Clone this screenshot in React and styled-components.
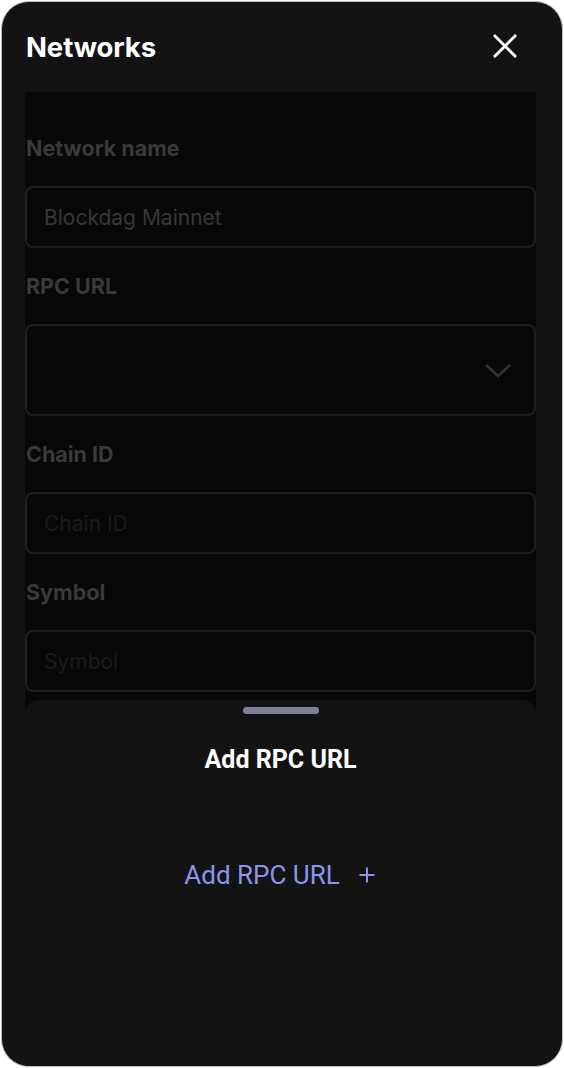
import React from "react";
import styled, { createGlobalStyle } from "styled-components";

const Global = createGlobalStyle`
  html, body { margin: 0; padding: 0; background: #ffffff; }
  * { box-sizing: border-box; }
`;

const Frame = styled.div`
  width: 564px;
  height: 1068px;
  padding: 1px;
  background: #ffffff;
`;

const Panel = styled.div`
  position: relative;
  width: 562px;
  height: 1066px;
  background: #131313;
  border: 1px solid #bdbdbd;
  border-radius: 28px;
  overflow: hidden;
  display: flex;
  flex-direction: column;
  font-family: Inter, "Noto Sans", sans-serif;
`;

const Header = styled.div`
  height: 90px;
  padding: 0 24px 0 24px;
  display: flex;
  align-items: center;
  justify-content: space-between;
`;

const Title = styled.h1`
  margin: 0;
  padding-bottom: 1px;
  font-size: 27.5px;
  font-weight: 700;
  color: #ffffff;
  letter-spacing: -0.1px;
`;

const CloseButton = styled.button`
  width: 30px;
  height: 30px;
  padding: 0;
  margin-right: 18px;
  margin-bottom: 2px;
  border: none;
  background: transparent;
  display: flex;
  align-items: center;
  justify-content: center;
`;

const Overlay = styled.div`
  margin: 0 26px 0 23px;
  height: 620px;
  background: #080808;
  padding: 44px 0 0 0;
  display: flex;
  flex-direction: column;
  gap: 26px;
`;

const Field = styled.div`
  display: flex;
  flex-direction: column;
  gap: 26px;
`;

const Label = styled.label`
  height: 24px;
  line-height: 24px;
  font-size: 21.5px;
  font-weight: 700;
  color: #3a3a3a;
  padding-left: 1px;
`;

const InputBox = styled.div`
  height: ${(p) => (p.$tall ? 92 : 62)}px;
  border: 2px solid #1f1f24;
  border-radius: 8px;
  display: flex;
  align-items: center;
  justify-content: space-between;
  padding: 0 22px 0 17px;
  font-size: 21px;
  color: ${(p) => (p.$placeholder ? "#1c1c1c" : "#383838")};
`;

const Sheet = styled.div`
  position: absolute;
  left: 23px;
  right: 26px;
  top: 698px;
  bottom: 0;
  background: #131313;
  border-radius: 14px 14px 0 0;
  display: flex;
  flex-direction: column;
  align-items: center;
  font-family: Roboto, "Noto Sans", sans-serif;
`;

const Handle = styled.div`
  margin-top: 7px;
  width: 76px;
  height: 7px;
  border-radius: 4px;
  background: #7c8194;
`;

const SheetTitle = styled.h2`
  margin: 31px 0 0 0;
  font-size: 25px;
  font-weight: 700;
  color: #ffffff;
  line-height: 30px;
`;

const AddLink = styled.button`
  margin-top: 85px;
  border: none;
  background: transparent;
  color: #8a95ee;
  font-family: Roboto, "Noto Sans", sans-serif;
  font-size: 26px;
  line-height: 30px;
  font-weight: 400;
  display: flex;
  align-items: center;
  gap: 19px;
  padding: 0;
  padding-right: 2px;
`;

function CloseIcon() {
  return (
    <svg width="24" height="24" viewBox="0 0 24 24">
      <path d="M2 2 L22 22 M22 2 L2 22" stroke="#ffffff" strokeWidth="2.8" strokeLinecap="square" />
    </svg>
  );
}

function PlusIcon() {
  return (
    <svg width="16" height="16" viewBox="0 0 16 16">
      <path d="M8 0.5 V15.5 M0.5 8 H15.5" stroke="#8a95ee" strokeWidth="2" />
    </svg>
  );
}

function Chevron() {
  return (
    <svg width="28" height="16" viewBox="0 0 28 16">
      <path d="M2 3 L14 14 L26 3" stroke="#333333" strokeWidth="2.6" fill="none" />
    </svg>
  );
}

export default function App() {
  return (
    <>
      <Global />
      <Frame>
        <Panel>
          <Header>
            <Title>Networks</Title>
            <CloseButton aria-label="Close">
              <CloseIcon />
            </CloseButton>
          </Header>
          <Overlay>
            <Field>
              <Label>Network name</Label>
              <InputBox>Blockdag Mainnet</InputBox>
            </Field>
            <Field>
              <Label>RPC URL</Label>
              <InputBox $tall>
                <span />
                <Chevron />
              </InputBox>
            </Field>
            <Field>
              <Label>Chain ID</Label>
              <InputBox $placeholder>Chain ID</InputBox>
            </Field>
            <Field>
              <Label>Symbol</Label>
              <InputBox $placeholder>Symbol</InputBox>
            </Field>
          </Overlay>
          <Sheet>
            <Handle />
            <SheetTitle>Add RPC URL</SheetTitle>
            <AddLink>
              Add RPC URL
              <PlusIcon />
            </AddLink>
          </Sheet>
        </Panel>
      </Frame>
    </>
  );
}
